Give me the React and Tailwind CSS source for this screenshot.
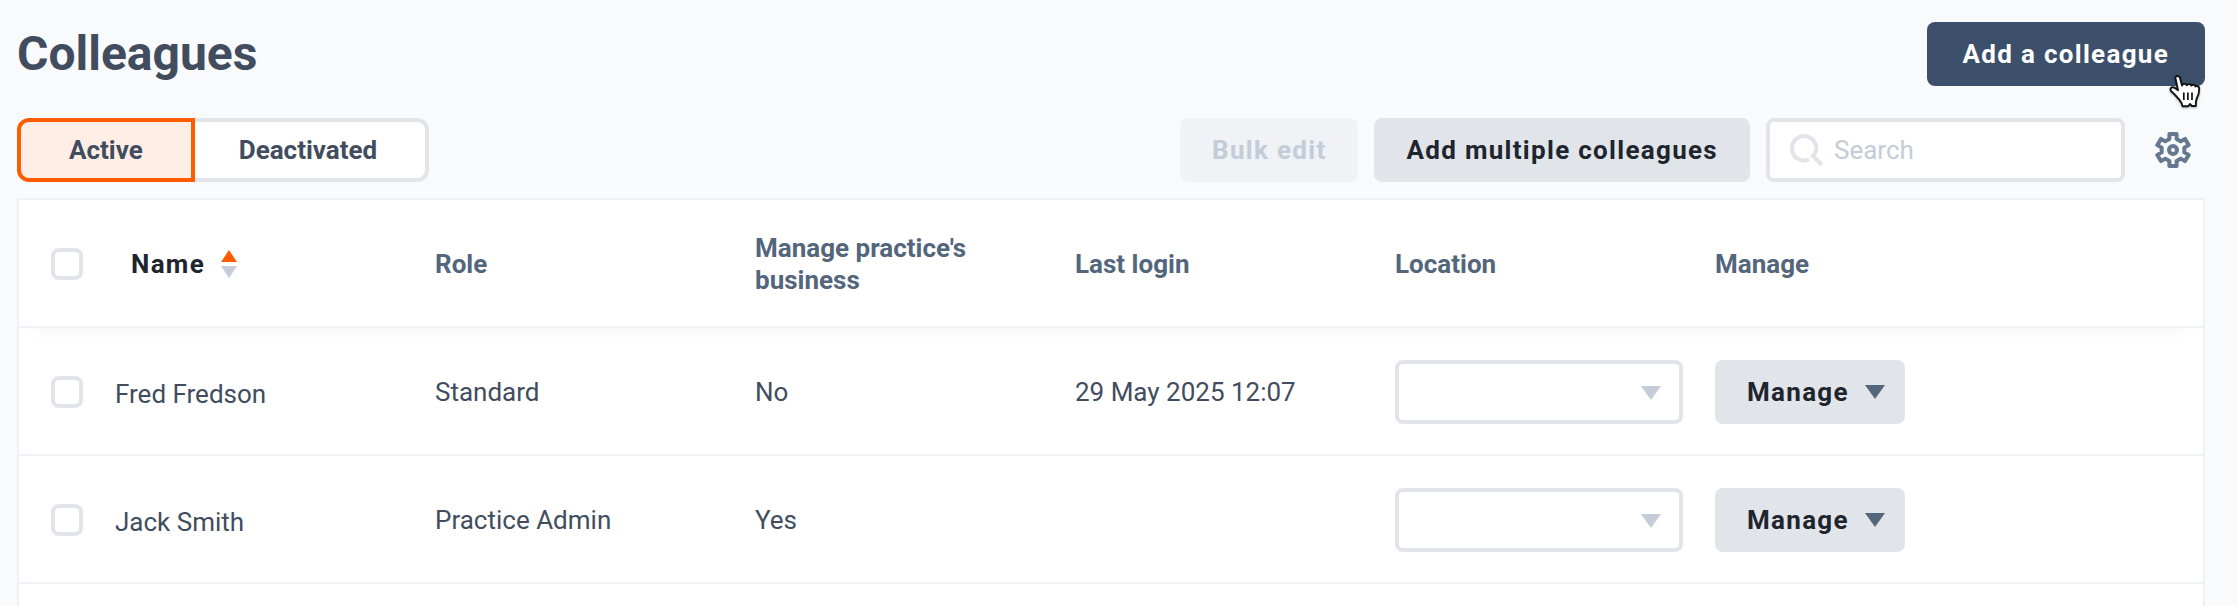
import React from "react";
import clsx from "clsx";

const colleagues = [
  { name: "Fred Fredson", role: "Standard", business: "No", lastLogin: "29 May 2025 12:07" },
  { name: "Jack Smith", role: "Practice Admin", business: "Yes", lastLogin: "" },
];

const buttonBase =
  "flex h-16 shrink-0 items-center justify-center rounded-lg text-[26px] leading-8 font-bold tracking-wider whitespace-nowrap";

function Triangle({ up = false, className }) {
  return (
    <svg viewBox="0 0 20 14" preserveAspectRatio="none" className={className} fill="currentColor" aria-hidden="true">
      <path d={up ? "M0 14h20L10 0z" : "M0 0h20L10 14z"} />
    </svg>
  );
}

function Checkbox({ label }) {
  return (
    <input
      type="checkbox"
      aria-label={label}
      className="block size-8 appearance-none rounded-lg border-4 border-[#e1e4e9] bg-white checked:bg-[#ff5c00]"
    />
  );
}

function SearchIcon() {
  return (
    <svg viewBox="0 0 34 34" className="size-[34px] shrink-0" fill="none" stroke="#e1e4e9" strokeWidth="4" aria-hidden="true">
      <path d="M19 26.5A12.2 12.2 0 1 1 24.3 22" />
      <path d="M21.5 21.5 32 32" />
    </svg>
  );
}

// Outline of the cog: the same four corners of a tooth, turned six times by 60 degrees.
const toothCorners = [[-3.6, 11], [-3.6, 16], [3.6, 16], [3.6, 11]];
const gearPoints = [0, 1, 2, 3, 4, 5]
  .flatMap((tooth) => {
    const angle = (tooth * Math.PI) / 3;
    return toothCorners.map(([x, r]) => {
      const px = 18 + x * Math.cos(angle) + r * Math.sin(angle);
      const py = 18 + x * Math.sin(angle) - r * Math.cos(angle);
      return `${px.toFixed(2)},${py.toFixed(2)}`;
    });
  })
  .join(" ");

function GearIcon() {
  return (
    <svg viewBox="0 0 36 36" className="size-9" fill="none" stroke="#64788f" strokeWidth="4" strokeLinejoin="round" aria-hidden="true">
      <polygon points={gearPoints} />
      <circle cx="18" cy="18" r="4" />
    </svg>
  );
}

function HandCursor() {
  return (
    <svg viewBox="0 0 32 34" className="absolute -bottom-[23px] right-1 h-[34px] w-8 drop-shadow-[0_1px_1px_rgba(0,0,0,0.3)]" aria-hidden="true">
      <path
        d="M6.500 3.500C6 .5 10 0 11 3l2 7.500c.5-2 4-2.200 4.700-.2 1-1.600 4-1.500 4.600.3 1-1.300 3.600-1 4.200.8 1.800-1 3.800 0 3.700 2.600 0 4.500-.8 6.500-2.400 9.500-.8 1.600-1 4-1 7.500h-4l-1.800-2-2 2.300h-5.500c0-3-1.500-4.500-3.500-7C7.500 21.500 6 19.500 3 17c-2.600-2.200-1.500-5 1-4.700 2 .2 3.500 1.700 5 3z"
        fill="#fff" stroke="#111" strokeWidth="1.900" strokeLinejoin="round"
      />
      <path d="M14.800 17.500v7.500M18.900 17.500v7.500M23 17.500v7.500" stroke="#111" strokeWidth="1.700" />
    </svg>
  );
}

export default function App() {
  return (
    <main className="min-h-screen bg-[#f9fafc] pt-[22px] pr-8 pl-[17px] font-['Roboto',sans-serif] text-[26px] leading-8 text-[#414d5e]">
      <header className="flex items-center justify-between">
        <h1 className="text-5xl font-bold">Colleagues</h1>
        <div className="relative">
          <button type="button" className={clsx(buttonBase, "bg-[#3c506b] px-9 text-white")}>
            Add a colleague
          </button>
          <HandCursor />
        </div>
      </header>

      <div className="mt-8 flex items-center justify-between">
        <div className="flex h-16 font-bold">
          <button type="button" aria-pressed="true" className="rounded-l-xl border-4 border-[#ff5c00] bg-[#ffeee6] px-12">
            Active
          </button>
          <button type="button" aria-pressed="false" className="rounded-r-xl border-4 border-l-0 border-[#e1e4e9] bg-white pr-12 pl-11">
            Deactivated
          </button>
        </div>
        <div className="flex items-center gap-4">
          <button type="button" disabled className={clsx(buttonBase, "bg-[#f0f2f5] px-8 text-[#c3ccd8]")}>
            Bulk edit
          </button>
          <button type="button" className={clsx(buttonBase, "bg-[#e1e4e9] px-8 text-[#1e252f]")}>
            Add multiple colleagues
          </button>
          <label className="flex h-16 w-[359px] items-center gap-2.5 rounded-lg border-4 border-[#e1e4e9] bg-white pr-4 pl-5">
            <SearchIcon />
            <input type="text" aria-label="Search" placeholder="Search" className="w-full min-w-0 outline-none placeholder:text-[#c3ccd8]" />
          </label>
          <button type="button" aria-label="Table settings" className="px-3.5">
            <GearIcon />
          </button>
        </div>
      </div>

      <table className="mt-4 w-full table-fixed border-separate border-spacing-0 border-2 border-b-0 border-[#f0f1f6] bg-white text-left">
        <colgroup>
          <col className="w-24" />
          <col className="w-80" />
          <col className="w-80" />
          <col className="w-80" />
          <col className="w-80" />
          <col className="w-80" />
          <col />
        </colgroup>
        <thead>
          <tr className="text-[#53667c] shadow-[0_16px_16px_-16px_rgba(0,0,0,0.06)] *:h-32 *:border-b-2 *:border-[#f0f1f6] *:p-0 *:pt-0.5 *:font-bold">
            <th className="pl-8!"><Checkbox label="Select all colleagues" /></th>
            <th>
              <button type="button" className="flex items-center gap-4 px-4 tracking-wider text-[#1e252f]">
                Name
                <span className="flex flex-col gap-1">
                  <Triangle up className="h-3 w-4 text-[#ff5c00]" />
                  <Triangle className="h-3 w-4 text-[#c3ccd8]" />
                </span>
              </button>
            </th>
            <th>Role</th>
            <th className="pr-16!">Manage practice's business</th>
            <th>Last login</th>
            <th>Location</th>
            <th>Manage</th>
          </tr>
        </thead>
        <tbody>
          {colleagues.map((person) => (
            <tr key={person.name} className="*:h-32 *:border-b-2 *:border-[#f0f1f6] *:p-0 *:pt-0.5">
              <td className="pl-8!"><Checkbox label={`Select ${person.name}`} /></td>
              <td className="pt-1.5!">{person.name}</td>
              <td>{person.role}</td>
              <td>{person.business}</td>
              <td>{person.lastLogin}</td>
              <td>
                <div className="relative mr-8">
                  <select aria-label={`Location for ${person.name}`} className="block h-16 w-full appearance-none rounded-lg border-4 border-[#e1e4e9] bg-white px-4">
                    <option value=""></option>
                  </select>
                  <Triangle className="pointer-events-none absolute top-[26px] right-[22px] h-3.5 w-5 text-[#c3ccd8]" />
                </div>
              </td>
              <td>
                <button type="button" className={clsx(buttonBase, "gap-4 bg-[#e1e4e9] pr-5 pl-8 text-[#1e252f]")}>
                  Manage
                  <Triangle className="h-3.5 w-5 text-[#53667c]" />
                </button>
              </td>
            </tr>
          ))}
          <tr>
            <td colSpan={7} className="h-[22px]" />
          </tr>
        </tbody>
      </table>
    </main>
  );
}
